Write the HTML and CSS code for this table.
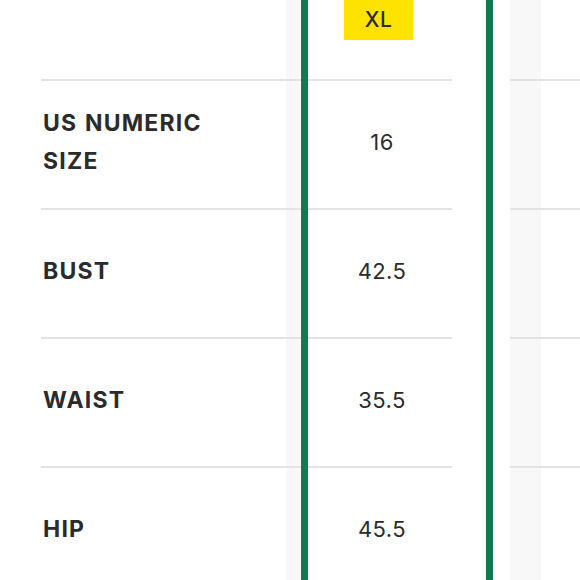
FILE: index.html
```html
<!DOCTYPE html>
<html lang="en">
<head>
<meta charset="utf-8">
<link rel="stylesheet" href="styles.css">
</head>
<body>
<div class="sheet">
  <div class="row head">
    <div class="label"></div>
    <div class="value"><span class="badge">XL</span></div>
  </div>
  <div class="rule"><span class="seg main"></span><span class="seg side"></span></div>
  <div class="row">
    <div class="label">US NUMERIC<br>SIZE</div>
    <div class="value">16</div>
  </div>
  <div class="rule"><span class="seg main"></span><span class="seg side"></span></div>
  <div class="row">
    <div class="label">BUST</div>
    <div class="value">42.5</div>
  </div>
  <div class="rule"><span class="seg main"></span><span class="seg side"></span></div>
  <div class="row">
    <div class="label">WAIST</div>
    <div class="value">35.5</div>
  </div>
  <div class="rule"><span class="seg main"></span><span class="seg side"></span></div>
  <div class="row">
    <div class="label">HIP</div>
    <div class="value">45.5</div>
  </div>
  <div class="frame"></div>
</div>
</body>
</html>
```

FILE: styles.css
```css
html, body {
  margin: 0;
  padding: 0;
}
body {
  width: 580px;
  height: 580px;
  overflow: hidden;
  font-family: "Inter", "Liberation Sans", sans-serif;
  color: #2b2b2b;
  background: linear-gradient(to right,
    #fff 0 286px,
    #f8f8f8 286px 300px,
    #fff 300px 510px,
    #f8f8f8 510px 541px,
    #fff 541px);
}
.sheet {
  position: relative;
  height: 580px;
}
.row {
  display: flex;
  align-items: center;
  height: 127px;
  padding-bottom: 6px;
  box-sizing: border-box;
}
.row.head {
  height: 79px;
  align-items: flex-start;
  padding-bottom: 0;
}
.label {
  width: 259px;
  padding-left: 43px;
  box-sizing: border-box;
  font-weight: 700;
  font-size: 23px;
  line-height: 38px;
  letter-spacing: 1.2px;
  word-spacing: 1px;
}
.value {
  width: 164px;
  margin-left: 41px;
  text-align: center;
  font-size: 22px;
  letter-spacing: 0.4px;
}
.badge {
  display: inline-block;
  background: #ffe300;
  padding: 6px 21px 6px 21px;
  line-height: 28px;
  font-size: 21px;
  font-weight: 500;
  margin-right: 7px;
}
.rule {
  display: flex;
  height: 2px;
}
.seg {
  display: block;
  height: 2px;
  background: #e3e3e3;
}
.seg.main {
  margin-left: 41px;
  width: 411px;
}
.seg.side {
  margin-left: 58px;
  flex: 1;
}
.frame {
  position: absolute;
  top: 0;
  bottom: 0;
  left: 301px;
  width: 178px;
  border-left: 7px solid #127a50;
  border-right: 7px solid #127a50;
}
```
